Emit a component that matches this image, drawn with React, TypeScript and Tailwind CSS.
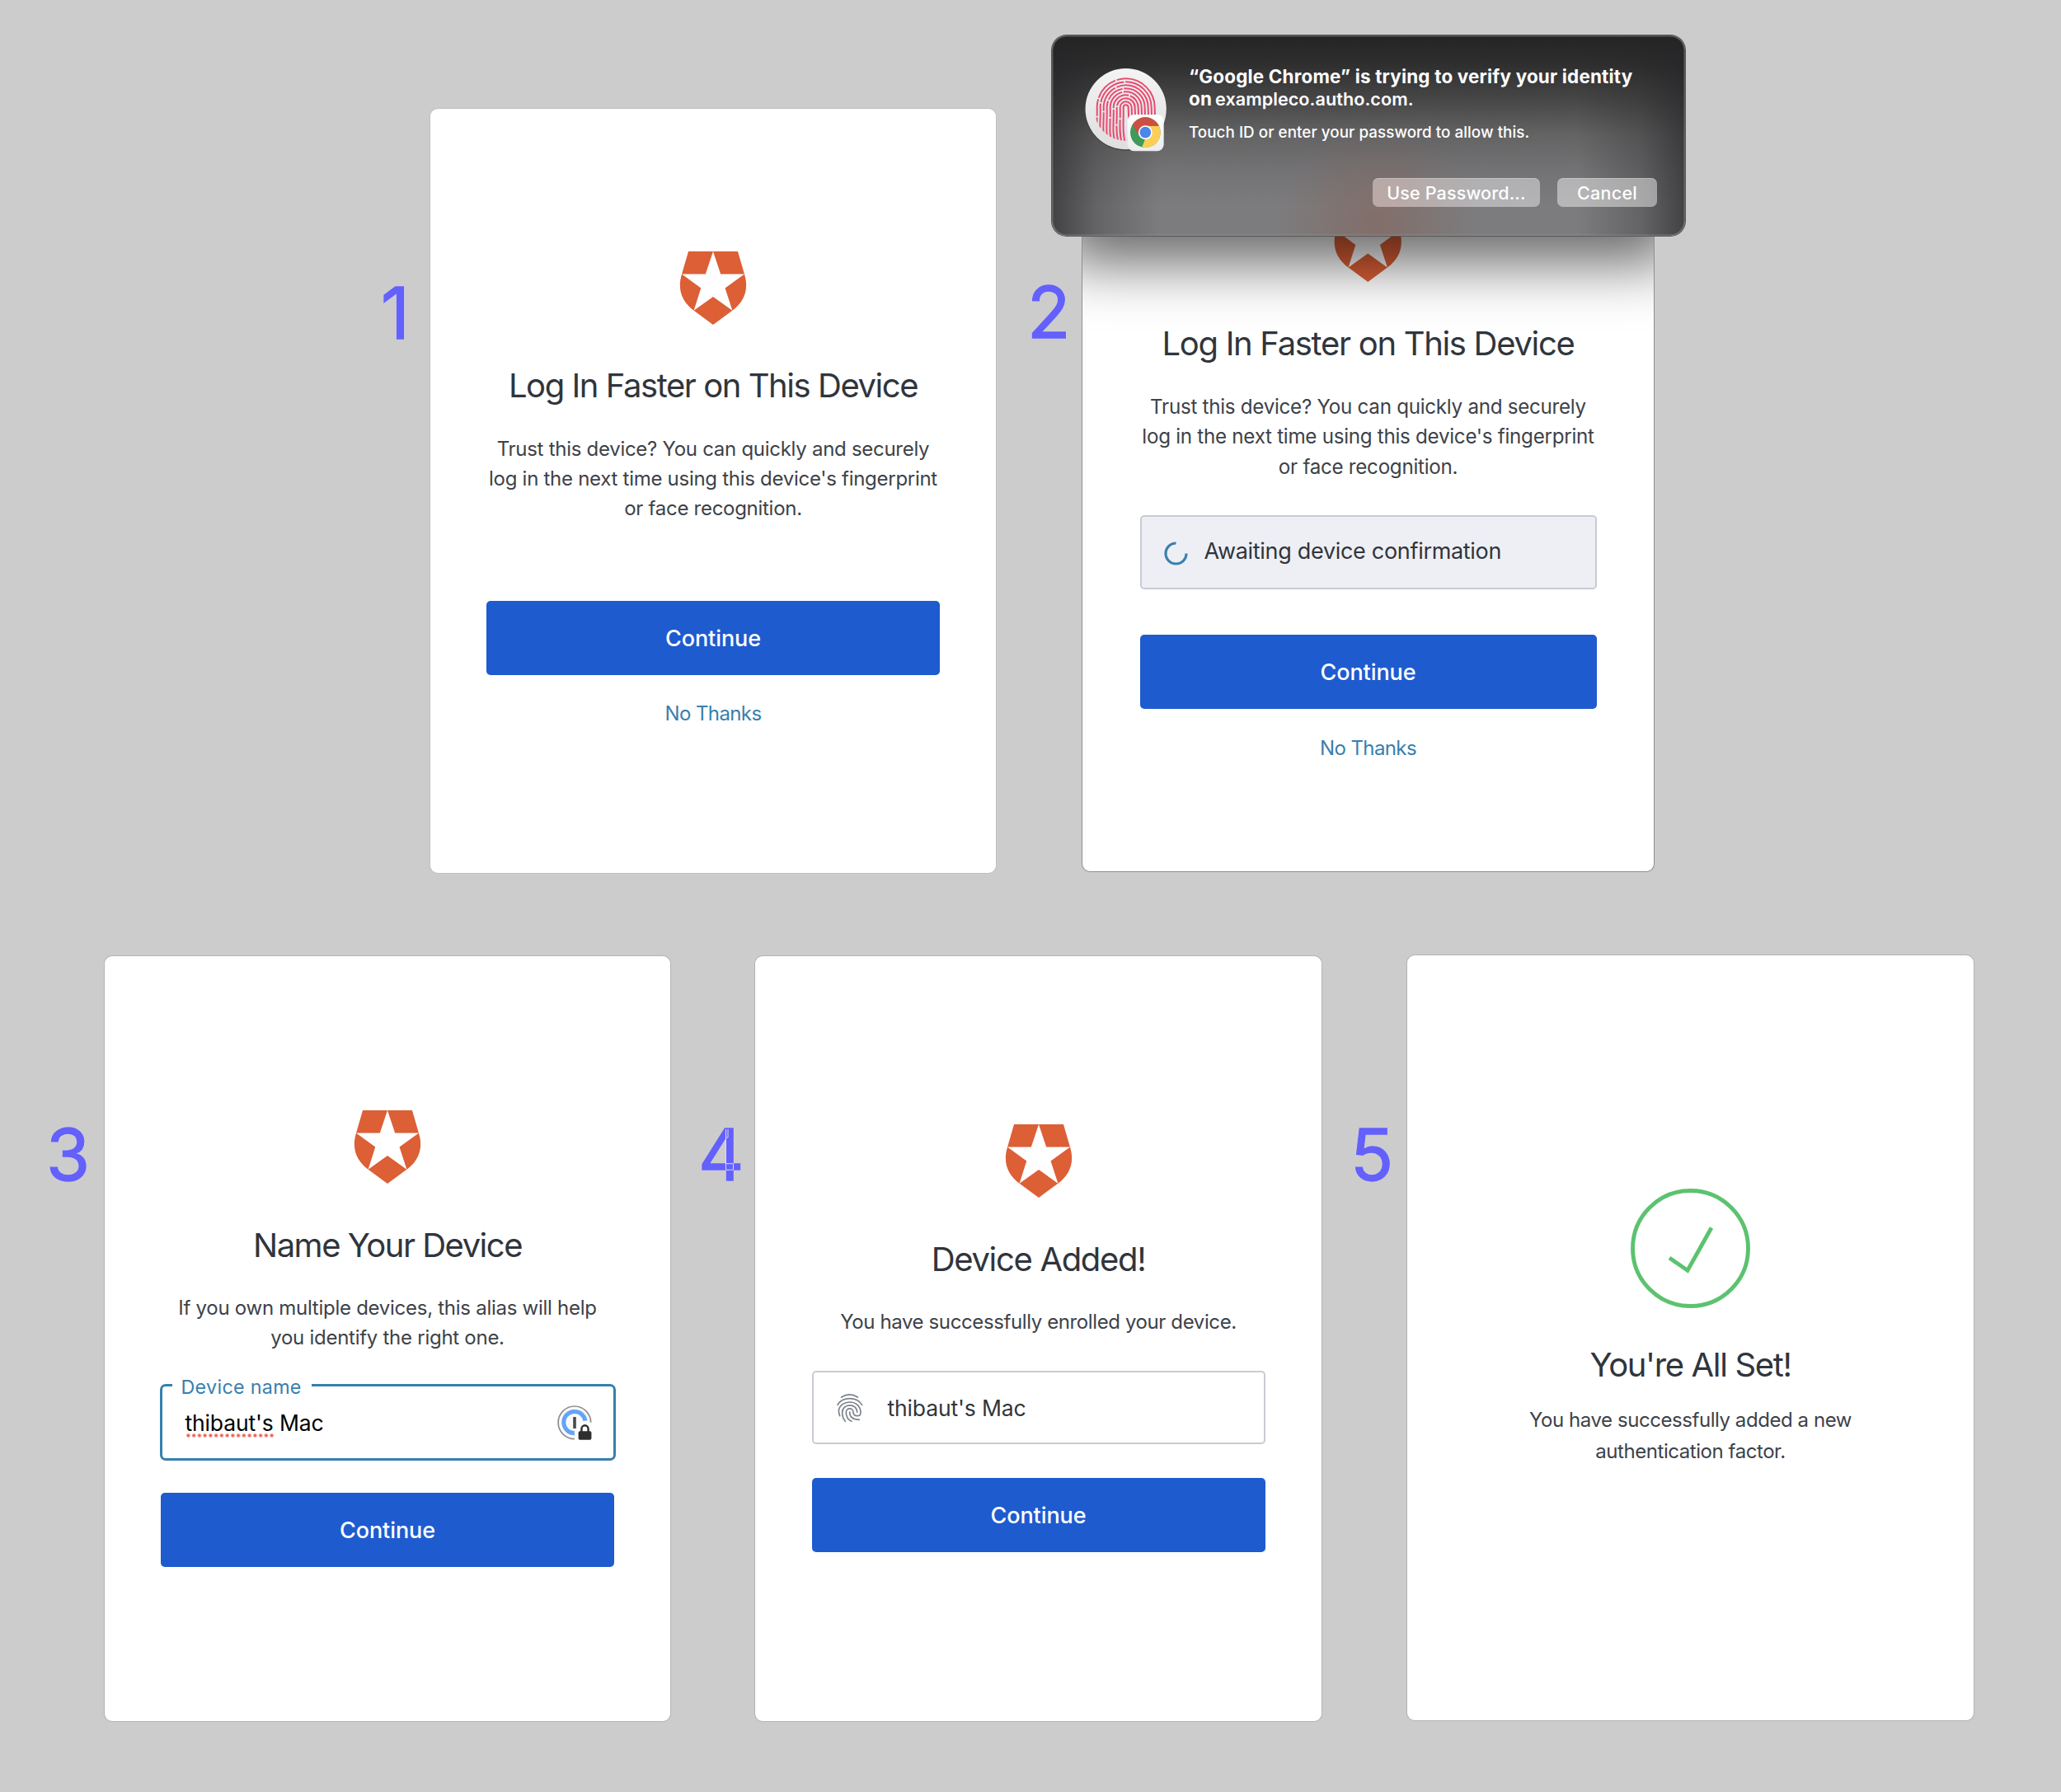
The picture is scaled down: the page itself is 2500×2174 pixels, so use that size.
import type { ReactNode } from "react";
import clsx from "clsx";

/* ---------- Icons ---------- */

function ShieldLogo({ className }: { className?: string }) {
  return (
    <svg viewBox="0 0 81.6 89.4" className={clsx("block shrink-0", className)}>
      <path
        fill="#dc5f36"
        fillRule="evenodd"
        d="M10.7 0H70.9L79 27.9C84.6 46 79 61.5 64.3 72.1L40.8 89.3L17.3 72.1C2.6 61.5 -3 46 2.6 27.9ZM40.8 0L31.6 27.5H2.6L26 44.6L17.3 72.1L40.8 55.2L64.3 72.1L55.4 44.6L79 27.5H50Z"
      />
    </svg>
  );
}

function Spinner() {
  return (
    <svg viewBox="0 0 29 29" className="block size-[29px]" fill="none">
      <path d="M14.5 2A12.5 12.5 0 1 0 27 14.5" stroke="#3a80ae" strokeWidth="3.2" />
    </svg>
  );
}

function SmallFingerprint() {
  return (
    <svg viewBox="1065 54 96 108" className="block h-[36px] w-[32px]" fill="none" stroke="#7c828d" strokeWidth="5" strokeLinecap="round">
      <path d="M1082 69Q1112 50 1141 69" />
      <path d="M1068 97Q1082 74 1112 74T1157 97" />
      <path d="M1076 137Q1072 128 1072 118C1075 98 1092 87 1112 87C1136 87 1152 104 1152 125C1152 141 1127 141 1125 125C1125 106 1099 106 1099 125C1099 141 1107 151 1119 157" />
      <path d="M1096 157C1086 144 1085 135 1085 125C1085 90 1139 90 1139 124" />
      <path d="M1112 123C1112 141 1124 151 1147 151" />
    </svg>
  );
}

function PasswordManagerIcon() {
  return (
    <svg viewBox="0 0 42 42" className="block size-[42px]" fill="none">
      <circle cx="20.7" cy="20.9" r="20" fill="#fafafa" />
      <path d="M20.9 40.6A19.8 19.8 0 1 1 40.7 20.8" stroke="#8e8e8e" strokeWidth="1.7" />
      <path d="M20.9 33.8A13.2 13.2 0 1 1 34 18.6" stroke="#62a4f8" strokeWidth="5" />
      <rect x="19.2" y="14" width="3.6" height="14" rx=".6" fill="#4a4a4a" />
      <path d="M24 27.5L28 21.5H40L42 30V42H24Z" fill="#fff" />
      <path d="M29.4 33V28.8A4.1 4.6 0 0 1 37.6 28.8V33" stroke="#2e2e2e" strokeWidth="2.4" />
      <rect x="25.6" y="31.2" width="15.8" height="10.6" rx="1.8" fill="#2e2e2e" />
    </svg>
  );
}

function SuccessIcon() {
  return (
    <svg viewBox="0 0 145 145" className="block size-[145px] shrink-0" fill="none" stroke="#5cc26f" strokeWidth="4.9">
      <circle cx="72.5" cy="72.5" r="70" />
      <path d="M47 84L69 99.3L98 47.5" />
    </svg>
  );
}

const ridges = [
  { r: 9, dash: "300" },
  { r: 21, dash: "92 5 300" },
  { r: 33, dash: "70 5 62 5 300" },
  { r: 45, dash: "128 5 84 5 300" },
  { r: 57, dash: "96 5 110 5 300" },
  { r: 69, dash: "160 5 66 5 300" },
  { r: 81, dash: "118 5 100 5 300" },
  { r: 93, dash: "150 5 120 5 300" },
  { r: 105, dash: "100 5 62 5 90 5 300" },
];

function TouchIdIcon() {
  return (
    <svg viewBox="76 62 306 312" className="block h-[104px] w-[102px]" fill="none">
      <defs>
        <linearGradient id="disc" x1="0" y1="0" x2="0" y2="1">
          <stop offset="0" stopColor="#f4f4f4" />
          <stop offset="1" stopColor="#dedede" />
        </linearGradient>
        <linearGradient id="tile" x1="0" y1="0" x2="0" y2="1">
          <stop offset="0" stopColor="#ffffff" />
          <stop offset="1" stopColor="#ececec" />
        </linearGradient>
        <clipPath id="print">
          <circle cx="229" cy="216" r="116" />
        </clipPath>
        <clipPath id="wheel">
          <circle cx="299" cy="301" r="55" />
        </clipPath>
      </defs>
      <circle cx="228" cy="219" r="148" fill="#000" opacity=".25" />
      <circle cx="228" cy="215.5" r="147.5" fill="url(#disc)" />
      <g clipPath="url(#print)" stroke="#e84a6f" strokeWidth="6">
        {ridges.map(({ r, dash }) => (
          <path
            key={r}
            strokeDasharray={dash}
            d={`M${236 - r} 345C${222 - r * 1.02} 300 ${230 - r} 270 ${228 - r} 210A${r} ${r} 0 0 1 ${228 + r} 210C${229 + r} 262 ${236 + r} 290 ${226 + r} 345`}
          />
        ))}
      </g>
      <rect x="234" y="236" width="132" height="133" rx="24" fill="url(#tile)" />
      <g clipPath="url(#wheel)">
        <rect x="240" y="240" width="120" height="120" fill="#3f9a5b" />
        <path d="M299 301L299 277H360V360H294Z" fill="#fbcf56" />
        <path d="M299 277H356L350 240H240L254 274L276 313L299 301Z" fill="#cb5043" />
        <path d="M322 313L294 360H284L299 325Z" fill="#fbcf56" />
        <path d="M254 274L278 314L299 301Z" fill="#cb5043" />
      </g>
      <circle cx="299" cy="301" r="25.5" fill="#fff" />
      <circle cx="299" cy="301" r="20.5" fill="#4a86ec" />
    </svg>
  );
}

/* ---------- Building blocks ---------- */

function StepNumber({ children, className }: { children: ReactNode; className: string }) {
  return (
    <span
      className={clsx(
        "relative block shrink-0 text-[86px] leading-[86px] text-[#6460fb] [-webkit-text-stroke:1.4px_#6460fb] [text-shadow:1px_0_0_#e2dff2,-1px_0_0_#e2dff2,0_1px_0_#e2dff2,0_-1px_0_#e2dff2]",
        className,
      )}
    >
      {children}
    </span>
  );
}

function Card({ children, className }: { children: ReactNode; className: string }) {
  return (
    <section className={clsx("flex shrink-0 flex-col items-center rounded-[9px] bg-white text-[#30353c] ring-1", className)}>
      {children}
    </section>
  );
}

function Title({ children, className }: { children: ReactNode; className: string }) {
  return <h2 className={clsx("text-[40px] leading-[48px] whitespace-nowrap", className)}>{children}</h2>;
}

function Body({ children, className }: { children: ReactNode; className: string }) {
  return <p className={clsx("text-center whitespace-nowrap text-[#3d4249]", className)}>{children}</p>;
}

function ContinueButton({ className }: { className: string }) {
  return (
    <button className={clsx("flex h-[90px] shrink-0 items-center justify-center rounded-[5px] bg-[#1e5bcf] pt-[2px] text-[27px] leading-[36px] font-medium tracking-[-0.1px] text-white", className)}>
      Continue
    </button>
  );
}

function NoThanks({ className }: { className: string }) {
  return <a className={clsx("text-[24px] leading-[36px] tracking-[-0.6px] text-[#3880ae]", className)}>No Thanks</a>;
}

function VerifyDialog() {
  return (
    <div className="absolute -top-[79px] -left-[37px] flex h-[243px] w-[768px] flex-col rounded-[18px] bg-[radial-gradient(120px_120px_at_393px_228px,rgba(135,98,88,0.55),rgba(135,98,88,0)),linear-gradient(90deg,rgba(36,36,38,0.66)_0%,rgba(36,36,38,0.28)_7%,rgba(36,36,38,0)_17%,rgba(36,36,38,0)_83%,rgba(36,36,38,0.28)_93%,rgba(36,36,38,0.66)_100%),linear-gradient(180deg,#242425_0%,#2f2f30_15%,#484849_33%,#646465_50%,#737375_68%,#7c7c7e_85%,#7c7c7e_100%)] text-white shadow-[inset_0_0_0_1.5px_rgba(150,150,150,0.45),0_0_0_1px_#555]">
      <div className="flex pt-[36px]">
        <div className="mt-[2px] ml-[39px] w-[127px] shrink-0">
          <TouchIdIcon />
        </div>
        <div className="whitespace-nowrap">
          <p className="text-[22.4px] leading-[27.3px] font-bold tracking-[0.2px]">
            “Google Chrome” is trying to verify your identity
            <br />
            on <span className="-ml-[1.5px] text-[21.6px] font-semibold tracking-[0.05px]">exampleco.autho.com.</span>
          </p>
          <p className="mt-[12px] text-[18.8px] leading-[27px] font-medium tracking-[0.06px]">Touch ID or enter your password to allow this.</p>
        </div>
      </div>
      <div className="mt-auto mr-[34px] mb-[35px] flex justify-end gap-[21px] text-[21.5px] leading-[34px] font-medium">
        <button className="h-[35px] w-[203px] rounded-[7px] bg-[linear-gradient(90deg,rgba(235,215,212,0.55),rgba(240,238,240,0.48)_60%)] tracking-[0.15px] shadow-[inset_0_1px_0_rgba(255,255,255,0.25)]">
          Use Password...
        </button>
        <button className="h-[35px] w-[121px] rounded-[7px] bg-white/45 tracking-[0.3px] shadow-[inset_0_1px_0_rgba(255,255,255,0.25)]">Cancel</button>
      </div>
    </div>
  );
}

/* ---------- Page ---------- */

export default function App() {
  return (
    <main className="flex h-[2174px] w-[2500px] flex-col overflow-hidden bg-[#cccccc] font-['Inter',sans-serif]">
      <div className="flex h-[1158px] items-start pl-[462px]">
        <StepNumber className="mt-[337px] w-[60px]">1</StepNumber>
        <Card className="mt-[132px] h-[927px] w-[686px] pt-[173px] ring-[#c0c0c0]">
          <ShieldLogo className="h-[89px] w-[82px]" />
          <Title className="mt-[50px] tracking-[-1.45px]">Log In Faster on This Device</Title>
          <Body className="mt-[35px] text-[24px] leading-[36px] tracking-[-0.28px]">
            Trust this device? You can quickly and securely
            <br />
            log in the next time using this device's fingerprint
            <br />
            or face recognition.
          </Body>
          <ContinueButton className="mt-[94px] w-[550px]" />
          <NoThanks className="mt-[29px]" />
        </Card>

        <StepNumber className="mt-[336px] ml-[38px] w-[67px]">2</StepNumber>
        <div className="relative mt-[122px]">
          <Card className="h-[935px] w-[693px] pt-[130px] ring-[#8f8f8f]">
            <ShieldLogo className="h-[90px] w-[82.5px]" />
            <Title className="mt-[51px] tracking-[-1.31px]">Log In Faster on This Device</Title>
            <Body className="mt-[35px] text-[24.2px] leading-[36.3px] tracking-[-0.28px]">
              Trust this device? You can quickly and securely
              <br />
              log in the next time using this device's fingerprint
              <br />
              or face recognition.
            </Body>
            <div className="mt-[40px] flex h-[90px] w-[554px] shrink-0 items-center rounded-[5px] border-2 border-[#c8cbd5] bg-[#eeeff4] pl-[27px]">
              <div className="mt-[3px]">
                <Spinner />
              </div>
              <span className="mb-[1px] ml-[20px] text-[27px] leading-[36px] tracking-[-0.31px]">Awaiting device confirmation</span>
            </div>
            <ContinueButton className="mt-[55px] w-[554px]" />
            <NoThanks className="mt-[30px]" />
          </Card>
          <div className="pointer-events-none absolute inset-0 overflow-hidden rounded-[8px]">
            <div className="absolute -top-[80px] -left-[37px] h-[244px] w-[768px] rounded-[18px] shadow-[0_45px_70px_-12px_rgba(0,0,0,0.6)]" />
          </div>
          <VerifyDialog />
        </div>
      </div>

      <div className="flex items-start pl-[56px]">
        <StepNumber className="mt-[200px] w-[71px]">3</StepNumber>
        <Card className="mt-[2px] h-[928px] w-[686px] pt-[187px] ring-[#b4b4b4]">
          <ShieldLogo className="h-[89px] w-[82px]" />
          <Title className="mt-[51px] tracking-[-1.5px]">Name Your Device</Title>
          <Body className="mt-[34px] text-[24px] leading-[36.2px] tracking-[-0.27px]">
            If you own multiple devices, this alias will help
            <br />
            you identify the right one.
          </Body>
          <div className="relative mt-[38px] flex h-[93px] w-[553px] shrink-0 rounded-[7px] border-[3px] border-[#3580ae]">
            <span className="absolute -top-[16px] left-[12px] w-[169px] bg-white pl-[11px] text-[23.3px] leading-[34px] tracking-[0.3px] text-[#3880ae]">
              Device name
            </span>
            <span className="mt-[26px] ml-[28px] text-[26.5px] leading-[36px] tracking-[-0.14px] whitespace-nowrap text-black">
              <span className="relative">
                thibaut's
                <span className="absolute top-[29px] left-0 h-[5px] w-[108px] bg-[radial-gradient(circle_at_center,#ee5a50_0,#f0766d_1.7px,transparent_2.6px)] bg-[length:6.75px_5px]" />
              </span>{" "}
              Mac
            </span>
            <div className="mt-[23px] mr-[26px] ml-auto">
              <PasswordManagerIcon />
            </div>
          </div>
          <ContinueButton className="mt-[39px] w-[550px]" />
        </Card>

        <StepNumber className="mt-[200px] ml-[34px] w-[69px]">
          4
          <svg viewBox="0 0 60 86" className="absolute top-0 left-0 h-[86px] w-[60px]" fill="none" stroke="#dcd9fb" strokeWidth="1">
            <path d="M33.5 12V61M36 12V22M33.5 22H36M33.5 53.7H42.5M33.5 61.3H42.5M42.5 54V61" />
          </svg>
        </StepNumber>
        <Card className="mt-[2px] h-[928px] w-[687px] pt-[204px] ring-[#b4b4b4]">
          <ShieldLogo className="h-[89px] w-[82px]" />
          <Title className="mt-[51px] tracking-[-1.32px]">Device Added!</Title>
          <Body className="mt-[34px] text-[24px] leading-[36px] tracking-[-0.39px]">You have successfully enrolled your device.</Body>
          <div className="mt-[41px] flex h-[89px] w-[550px] shrink-0 rounded-[5px] border-2 border-[#c8cbd5]">
            <div className="mt-[25px] ml-[28px]">
              <SmallFingerprint />
            </div>
            <span className="mt-[25px] ml-[30px] text-[26.5px] leading-[36px] tracking-[-0.14px]">thibaut's Mac</span>
          </div>
          <ContinueButton className="mt-[41px] w-[550px]" />
        </Card>

        <StepNumber className="mt-[200px] ml-[35px] w-[69px]">5</StepNumber>
        <Card className="mt-px h-[928px] w-[687px] pt-[283px] ring-[#b4b4b4]">
          <SuccessIcon />
          <Title className="mt-[45px] tracking-[-1.36px]">You're All Set!</Title>
          <Body className="mt-[24px] text-[24px] leading-[38px] tracking-[-0.44px]">
            You have successfully added a new
            <br />
            authentication factor.
          </Body>
        </Card>
      </div>
    </main>
  );
}
